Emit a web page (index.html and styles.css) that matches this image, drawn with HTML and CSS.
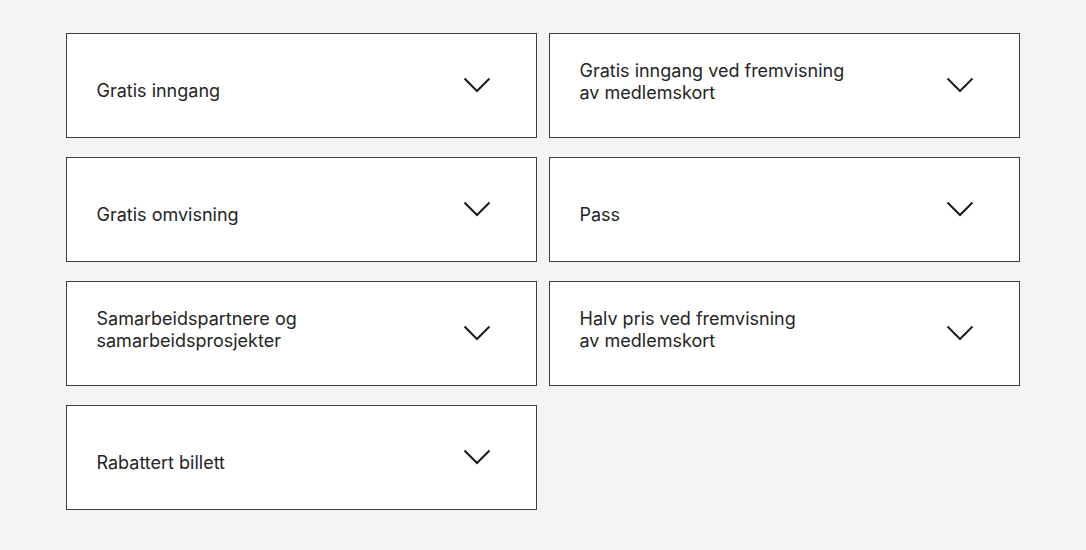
FILE: index.html
```html
<!DOCTYPE html>
<html lang="no">
<head>
<meta charset="utf-8">
<link rel="stylesheet" href="styles.css">
</head>
<body>
<div class="grid">
  <div class="card one"><span class="title">Gratis inngang</span><svg class="chev" viewBox="0 0 28 16"><path d="M1.5 1.5 L14 14 L26.5 1.5"/></svg></div>
  <div class="card two"><span class="title">Gratis inngang ved fremvisning<br>av medlemskort</span><svg class="chev" viewBox="0 0 28 16"><path d="M1.5 1.5 L14 14 L26.5 1.5"/></svg></div>
  <div class="card one"><span class="title">Gratis omvisning</span><svg class="chev" viewBox="0 0 28 16"><path d="M1.5 1.5 L14 14 L26.5 1.5"/></svg></div>
  <div class="card one"><span class="title">Pass</span><svg class="chev" viewBox="0 0 28 16"><path d="M1.5 1.5 L14 14 L26.5 1.5"/></svg></div>
  <div class="card two"><span class="title">Samarbeidspartnere og<br>samarbeidsprosjekter</span><svg class="chev" viewBox="0 0 28 16"><path d="M1.5 1.5 L14 14 L26.5 1.5"/></svg></div>
  <div class="card two"><span class="title">Halv pris ved fremvisning<br>av medlemskort</span><svg class="chev" viewBox="0 0 28 16"><path d="M1.5 1.5 L14 14 L26.5 1.5"/></svg></div>
  <div class="card one"><span class="title">Rabattert billett</span><svg class="chev" viewBox="0 0 28 16"><path d="M1.5 1.5 L14 14 L26.5 1.5"/></svg></div>
</div>
</body>
</html>
```
FILE: styles.css
```css
html, body { margin: 0; padding: 0; }
body {
  background: #f5f4f2;
  font-family: Inter, "Noto Sans", sans-serif;
  color: #252525;
  width: 1086px;
  height: 550px;
  overflow: hidden;
}
.grid {
  display: grid;
  grid-template-columns: 471px 471px;
  grid-auto-rows: 105px;
  column-gap: 12px;
  row-gap: 19px;
  padding: 33px 0 0 66px;
}
.card {
  box-sizing: border-box;
  background: #fff;
  border: 1.5px solid #3d3d3d;
  display: flex;
  align-items: center;
  justify-content: space-between;
  padding: 0 45px 0 29.5px;
}
.title {
  font-size: 18px;
  line-height: 22px;
}
.one .title { padding-top: 10px; }
.two .title { padding-bottom: 8px; }
.chev {
  width: 28px;
  height: 16px;
  fill: none;
  stroke: #1a1a1a;
  stroke-width: 2;
  margin-bottom: 2px;
}
```
